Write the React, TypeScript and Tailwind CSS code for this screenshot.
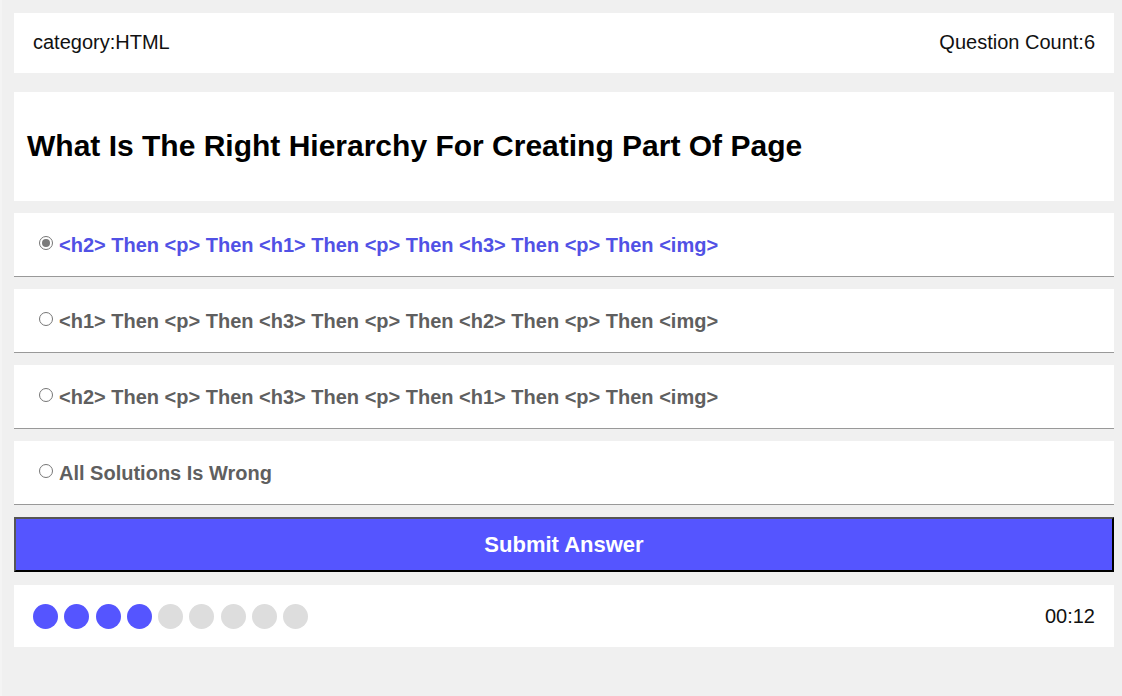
import React from "react";

const options = [
  "<h2> Then <p> Then <h1> Then <p> Then <h3> Then <p> Then <img>",
  "<h1> Then <p> Then <h3> Then <p> Then <h2> Then <p> Then <img>",
  "<h2> Then <p> Then <h3> Then <p> Then <h1> Then <p> Then <img>",
  "All Solutions Is Wrong",
];

const Radio: React.FC<{ checked: boolean }> = ({ checked }) => (
  <span className="w-[14px] h-[14px] rounded-full border border-[#767676] bg-white flex items-center justify-center shrink-0 -mt-[3px]">
    {checked && <span className="w-[8px] h-[8px] rounded-full bg-[#7a7a7a]" />}
  </span>
);

export default function App() {
  const selected = 0;
  const answered = 4;

  return (
    <div
      className="min-h-[696px] bg-[#f0f0f0] border-l-[2px] border-[#f4f4f4] pl-[12px] pr-[8px] pt-[13px]"
      style={{ fontFamily: '"Liberation Sans", Arial, sans-serif' }}
    >
      {/* Header */}
      <div className="bg-white h-[60px] px-[19px] flex items-center justify-between text-[20px] text-[#111]">
        <span className="-mt-[2px]">category:HTML</span>
        <span className="-mt-[2px]">Question Count:6</span>
      </div>

      {/* Question */}
      <div className="bg-white h-[109px] mt-[19px] px-[13px] flex items-center">
        <h1 className="text-[30px] font-bold text-black -mt-[2px]">
          What Is The Right Hierarchy For Creating Part Of Page
        </h1>
      </div>

      {/* Options */}
      <div className="mt-[12px] flex flex-col gap-[12px]">
        {options.map((opt, i) => (
          <div
            key={i}
            className="bg-white h-[64px] border-b border-[#999] pl-[25px] flex items-center gap-[6px]"
          >
            <Radio checked={i === selected} />
            <span
              className={`text-[20px] font-bold ${
                i === selected ? "text-[#5151e5]" : "text-[#5f5f5f]"
              }`}
            >
              {opt}
            </span>
          </div>
        ))}
      </div>

      {/* Submit */}
      <button className="mt-[12px] w-full h-[55px] bg-[#5555ff] border-2 border-t-[#555] border-l-[#555] border-r-black border-b-black text-white text-[22px] font-bold">
        Submit Answer
      </button>

      {/* Footer */}
      <div className="bg-white h-[62px] mt-[13px] px-[19px] flex items-center justify-between">
        <div className="flex gap-[6.25px]">
          {Array.from({ length: 9 }).map((_, i) => (
            <span
              key={i}
              className={`w-[25px] h-[25px] rounded-full ${
                i < answered ? "bg-[#5555ff]" : "bg-[#dddddd]"
              }`}
            />
          ))}
        </div>
        <span className="text-[20px] text-[#111]">00:12</span>
      </div>
    </div>
  );
}
